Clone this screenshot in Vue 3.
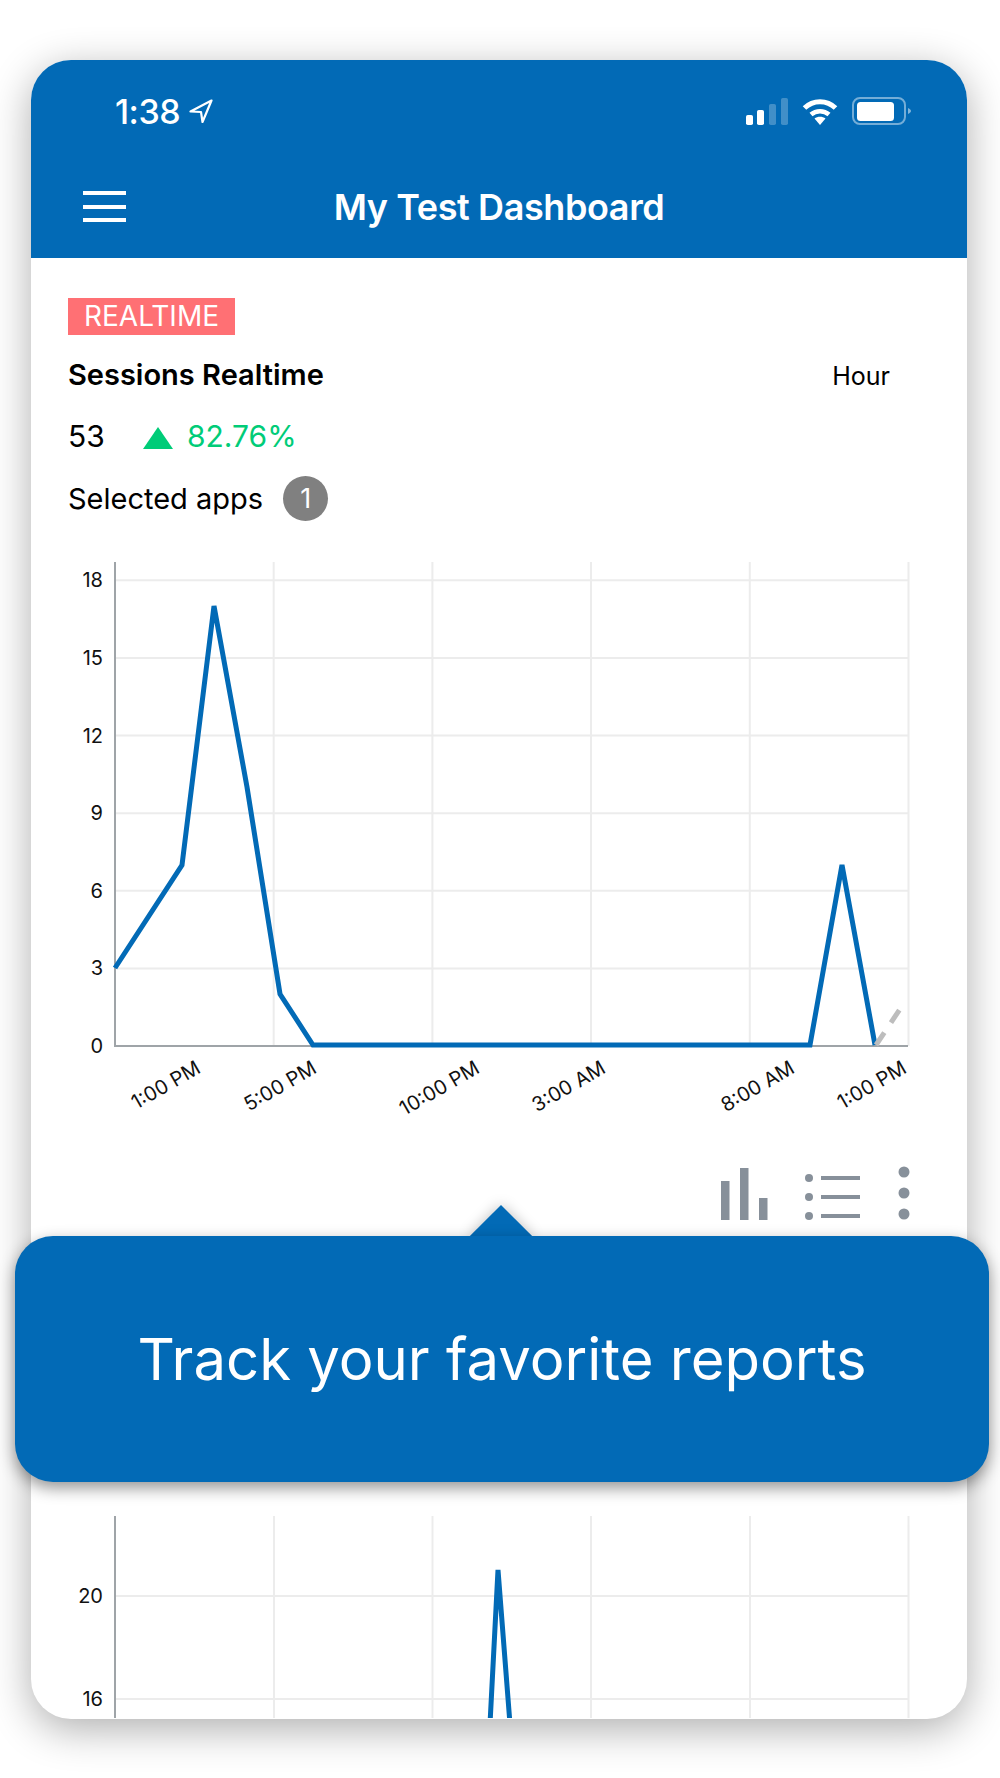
<script setup>
const yTicks = [18, 15, 12, 9, 6, 3, 0]
const y0 = 1047
const unit = 25.87
const xGrid = [273.7, 432.4, 591, 749.8, 908.5]
const xLabels = [
  { text: '1:00 PM', x: 202 },
  { text: '5:00 PM', x: 318 },
  { text: '10:00 PM', x: 481 },
  { text: '3:00 AM', x: 607 },
  { text: '8:00 AM', x: 796 },
  { text: '1:00 PM', x: 908 },
]
const series = '115,969 182,866 214,607 247,788 280,995 313,1046 810,1046 842,866 875,1046'
const ticks2 = [
  { label: '20', y: 1597 },
  { label: '16', y: 1700 },
]
const xGrid2 = [274, 432.5, 591, 750, 908.5]
</script>

<template>
  <div class="stage">
    <div class="phone">
      <header class="topbar">
        <div class="status">
          <div class="clock">
            <span>1:38</span>
            <svg width="24" height="24" viewBox="0 0 24 24">
              <path d="M22.5 1.5 L1.5 12.5 L12 13 L13.5 23 Z" fill="none" stroke="#fff" stroke-width="2.2" stroke-linejoin="round" />
            </svg>
          </div>
          <div class="status-icons">
            <svg width="42" height="27" viewBox="0 0 42 27">
              <rect x="0" y="17" width="7" height="10" rx="1.8" fill="#fff" />
              <rect x="11" y="12" width="7" height="15" rx="1.8" fill="#fff" />
              <rect x="23" y="6" width="7" height="21" rx="1.8" fill="#fff" opacity=".25" />
              <rect x="35" y="0" width="7" height="27" rx="1.8" fill="#fff" opacity=".25" />
            </svg>
            <svg width="36" height="27" viewBox="0 0 36 27">
              <path d="M2.5 10 C11 1.5 25 1.5 33.5 10" fill="none" stroke="#fff" stroke-width="5" />
              <path d="M9 16.5 C14 12 22 12 27 16.5" fill="none" stroke="#fff" stroke-width="4.5" />
              <path d="M12.5 20.5 C15.5 18 20.5 18 23.5 20.5 L18 27 Z" fill="#fff" />
            </svg>
            <svg width="60" height="28" viewBox="0 0 60 28">
              <rect x="1" y="1" width="52" height="26" rx="7" fill="none" stroke="#fff" stroke-opacity=".45" stroke-width="2" />
              <rect x="5" y="5" width="37" height="19" rx="3.5" fill="#fff" />
              <path d="M56 11 C58 12 59 13 59 14 C59 15 58 16 56 17 Z" fill="#fff" opacity=".5" />
            </svg>
          </div>
        </div>
        <div class="nav">
          <div class="burger"><i></i><i></i><i></i></div>
          <h1>My Test Dashboard</h1>
        </div>
      </header>

      <main class="content">
        <span class="badge">REALTIME</span>
        <div class="title-row">
          <strong>Sessions Realtime</strong>
          <span class="period">Hour</span>
        </div>
        <div class="metric">
          <span class="value">53</span>
          <span class="triangle"></span>
          <span class="delta">82.76%</span>
        </div>
        <div class="apps">
          <span>Selected apps</span>
          <span class="count">1</span>
        </div>

        <svg class="chart chart-one" viewBox="31 550 936 610">
          <line v-for="t in yTicks.slice(0, 6)" :key="t" x1="115" x2="908" :y1="y0 - t * unit" :y2="y0 - t * unit" class="grid" />
          <line v-for="x in xGrid" :key="x" :x1="x" :x2="x" y1="563" y2="1047" class="grid" />
          <line x1="115" x2="115" y1="563" y2="1048" class="axis" />
          <line x1="114" x2="908" y1="1047" y2="1047" class="axis" />
          <text v-for="t in yTicks" :key="'l' + t" x="103" :y="y0 - t * unit + 7" text-anchor="end" class="tick">{{ t }}</text>
          <polyline :points="series" class="line" />
          <line x1="876" y1="1046" x2="902" y2="1007" class="dash" />
          <text
            v-for="l in xLabels"
            :key="l.text + l.x"
            :transform="`translate(${l.x} 1073) rotate(-30)`"
            text-anchor="end"
            class="tick"
          >{{ l.text }}</text>
        </svg>

        <div class="actions">
          <svg width="46" height="52" viewBox="0 0 46 52">
            <rect x="0" y="13" width="8.5" height="39" />
            <rect x="19" y="0" width="8.5" height="52" />
            <rect x="38" y="30" width="8.5" height="22" />
          </svg>
          <svg width="55" height="46" viewBox="0 0 55 46">
            <circle cx="4" cy="4" r="4" />
            <circle cx="4" cy="23" r="4" />
            <circle cx="4" cy="42" r="4" />
            <rect x="16" y="2" width="39" height="4" />
            <rect x="16" y="21" width="39" height="4" />
            <rect x="16" y="40" width="39" height="4" />
          </svg>
          <svg width="12" height="54" viewBox="0 0 12 54">
            <circle cx="6" cy="6" r="5.5" />
            <circle cx="6" cy="27" r="5.5" />
            <circle cx="6" cy="48" r="5.5" />
          </svg>
        </div>

        <svg class="chart chart-two" viewBox="31 1517 936 202">
          <line v-for="t in ticks2" :key="t.label" x1="115" x2="908" :y1="t.y" :y2="t.y" class="grid" />
          <line v-for="x in xGrid2" :key="x" :x1="x" :x2="x" y1="1517" y2="1719" class="grid" />
          <line x1="115" x2="115" y1="1517" y2="1719" class="axis" />
          <text v-for="t in ticks2" :key="'l' + t.label" x="103" :y="t.y + 7" text-anchor="end" class="tick">{{ t.label }}</text>
          <polyline points="490,1725 498,1571 510,1725" class="line" />
        </svg>
      </main>
    </div>

    <div class="callout">
      <span class="callout-arrow"></span>
      <div class="callout-body">Track your favorite reports</div>
    </div>
  </div>
</template>

<style scoped>
.stage {
  position: relative;
  width: 1000px;
  height: 1778px;
  padding: 60px 33px 59px 31px;
  box-sizing: border-box;
  font-family: Inter, "Liberation Sans", sans-serif;
  color: #000;
  overflow: hidden;
  background: #fff;
}

.phone {
  height: 100%;
  border-radius: 40px;
  overflow: hidden;
  background: #fff;
  box-shadow: 0 10px 42px rgba(0, 0, 0, 0.32);
}

.topbar {
  height: 198px;
  background: #026ab6;
  color: #fff;
  box-sizing: border-box;
  padding-top: 37px;
}

.status {
  display: flex;
  justify-content: space-between;
  align-items: center;
  height: 28px;
  padding: 0 55px 0 84px;
}

.clock {
  display: flex;
  align-items: center;
  gap: 9px;
  font-size: 34px;
  font-weight: 500;
  letter-spacing: -0.5px;
}

.status-icons {
  display: flex;
  align-items: center;
  gap: 14px;
}

.nav {
  position: relative;
  height: 30px;
  margin-top: 67px;
}

.nav h1 {
  margin: 0;
  text-align: center;
  font-size: 36px;
  font-weight: 600;
  line-height: 30px;
  letter-spacing: -0.4px;
}

.burger {
  position: absolute;
  left: 52px;
  top: -1px;
  width: 43px;
  display: flex;
  flex-direction: column;
  gap: 9.5px;
}

.burger i {
  display: block;
  height: 4px;
  background: #fff;
}

.content {
  padding: 40px 31px 0 37px;
  height: 1461px;
  box-sizing: border-box;
}

.badge {
  display: block;
  width: 167px;
  height: 37px;
  line-height: 37px;
  text-align: center;
  background: #ff7074;
  color: #fff;
  font-size: 28px;
}

.title-row {
  display: flex;
  justify-content: space-between;
  align-items: baseline;
  margin-top: 20px;
  padding-right: 46px;
  line-height: 40px;
}

.title-row strong {
  font-size: 29px;
  font-weight: 600;
}

.period {
  font-size: 25px;
}

.metric {
  display: flex;
  align-items: center;
  margin-top: 23px;
  height: 34px;
  font-size: 30px;
}

.value {
  width: 75px;
}

.triangle {
  width: 0;
  height: 0;
  border-left: 15.5px solid transparent;
  border-right: 15.5px solid transparent;
  border-bottom: 22px solid #00cc78;
  margin: 3px 14px 0 0;
}

.delta {
  color: #00cc78;
}

.apps {
  display: flex;
  align-items: center;
  gap: 20px;
  margin-top: 23px;
  font-size: 29px;
}

.count {
  width: 45px;
  height: 45px;
  border-radius: 50%;
  background: #808080;
  color: #fff;
  display: flex;
  align-items: center;
  justify-content: center;
  font-size: 27px;
}

.chart {
  display: block;
  width: 936px;
  margin-left: -37px;
}

.chart-one {
  height: 610px;
  margin-top: 28px;
}

.chart-two {
  height: 202px;
  margin-top: 296px;
}

.grid {
  stroke: #ececec;
  stroke-width: 2;
}

.axis {
  stroke: #9fa4a8;
  stroke-width: 2;
}

.line {
  fill: none;
  stroke: #026ab6;
  stroke-width: 5;
  stroke-linejoin: miter;
}

.dash {
  stroke: #bdbdbd;
  stroke-width: 5;
  stroke-dasharray: 15 12;
}

.tick {
  font-size: 20px;
  fill: #111;
}

.actions {
  display: flex;
  justify-content: flex-end;
  align-items: flex-end;
  gap: 38px;
  height: 52px;
  margin-top: 9px;
  padding-right: 26px;
}

.actions svg {
  fill: #87909a;
  overflow: visible;
}

.callout {
  position: absolute;
  left: 15px;
  top: 1236px;
  width: 974px;
  height: 246px;
}

.callout-arrow {
  position: absolute;
  left: 464px;
  top: -22px;
  width: 44px;
  height: 44px;
  background: #026ab6;
  transform: rotate(45deg);
  box-shadow: 0 0 14px rgba(0, 0, 0, 0.25);
}

.callout-body {
  position: relative;
  height: 100%;
  border-radius: 38px;
  background: #026ab6;
  color: #fff;
  display: flex;
  align-items: center;
  justify-content: center;
  font-size: 58px;
  box-shadow: 0 6px 16px rgba(0, 0, 0, 0.42);
}
</style>
